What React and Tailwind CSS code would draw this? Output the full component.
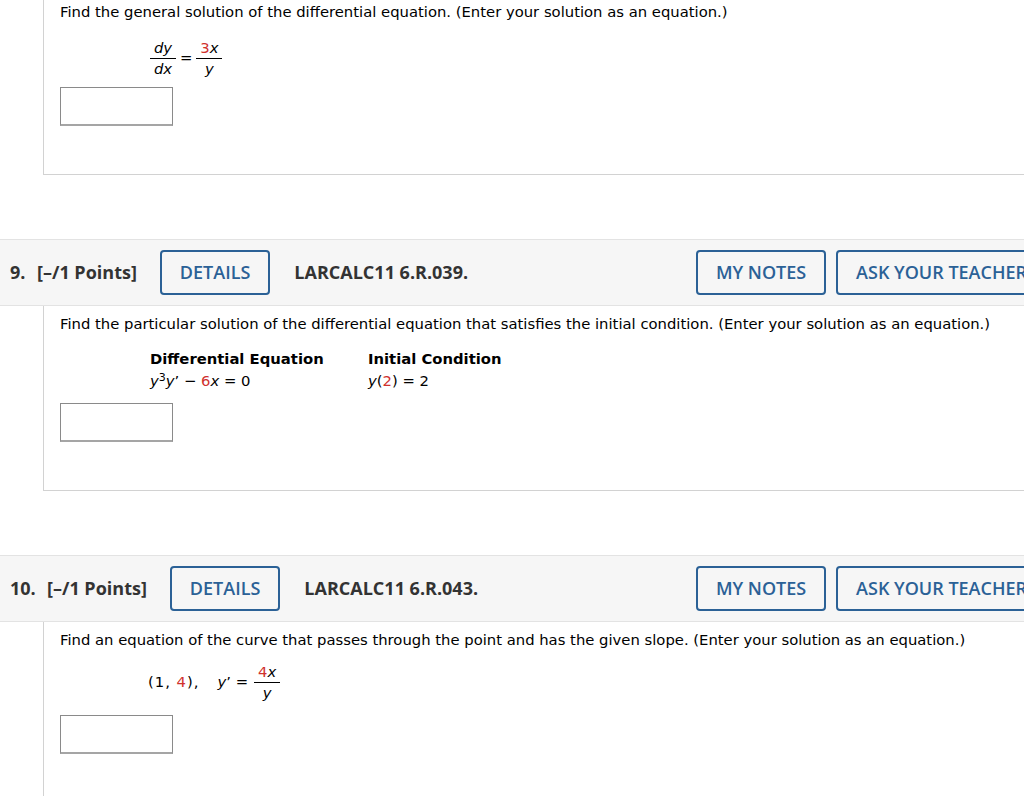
import React from "react";

const R = ({ children }) => <span className="text-[#d0312d]">{children}</span>;
const I = ({ children }) => <span className="italic">{children}</span>;

function Frac({ num, den, w = "w-[24px]" }) {
  return (
    <span className="inline-flex flex-col items-center align-middle">
      <span className="leading-[18px] pb-[1px] px-[2px]">{num}</span>
      <span className={`h-px bg-black ${w}`}></span>
      <span className="leading-[18px] pt-[1px] px-[2px]">{den}</span>
    </span>
  );
}

function InputBox({ className = "" }) {
  return (
    <div
      className={`w-[113px] h-[39px] border border-[#8a8a8a] border-b-2 border-b-[#a5a5a5] bg-white ${className}`}
    ></div>
  );
}

function Header({ num, numW, code }) {
  return (
    <div className="w-[1057px] h-[67px] bg-[#f6f6f6] border-y border-[#e3e3e3] flex items-center pl-[10px] font-['Open_Sans',sans-serif] text-[18px]">
      <span className={`font-bold text-[#333] ${numW}`}>{num}</span>
      <span className="font-bold text-[#333] mr-[6px]">[–/1 Points]</span>
      <button className="ml-[17px] h-[45px] px-[18px] border-2 border-[#2b6196] rounded-[4px] text-[#2b6196] font-semibold">
        DETAILS
      </button>
      <span className="ml-[24px] font-bold text-[#333]">{code}</span>
      <div className="ml-auto flex gap-[10px] pr-[10px]">
        <button className="h-[45px] w-[130px] border-2 border-[#2b6196] rounded-[4px] text-[#2b6196] font-semibold">
          MY NOTES
        </button>
        <button className="h-[45px] px-[18px] border-2 border-[#2b6196] rounded-[4px] text-[#2b6196] font-semibold whitespace-nowrap">
          ASK YOUR TEACHER
        </button>
      </div>
    </div>
  );
}

export default function App() {
  return (
    <div className="w-[1024px] h-[796px] overflow-hidden bg-white text-black font-['DejaVu_Sans',Verdana,sans-serif] text-[14.8px]">
      {/* Question 8 (partial) */}
      <div className="ml-[43px] h-[175px] border-l border-b border-[#d2d2d2] pl-[16px] pt-[2px]">
        <p className="leading-[20px]">
          Find the general solution of the differential equation. (Enter your solution as an equation.)
        </p>
        <div className="mt-[17px] ml-[90px] flex items-center">
          <Frac num={<I>dy</I>} den={<I>dx</I>} w="w-[26px]" />
          <span className="mx-[4px] leading-none">=</span>
          <Frac num={<><R>3</R><I>x</I></>} den={<I>y</I>} w="w-[26px]" />
        </div>
        <InputBox className="mt-[9px]" />
      </div>

      <div className="h-[64px]"></div>
      <Header num="9." numW="w-[27px]" code="LARCALC11 6.R.039." />

      {/* Question 9 */}
      <div className="ml-[43px] h-[185px] border-l border-b border-[#d2d2d2] pl-[16px] pt-[8px]">
        <p className="leading-[20px]">
          Find the particular solution of the differential equation that satisfies the initial condition. (Enter your solution as an equation.)
        </p>
        <div className="mt-[14px] ml-[90px] grid grid-cols-[218px_auto] leading-[22px]">
          <span className="font-bold">Differential Equation</span>
          <span className="font-bold">Initial Condition</span>
          <span>
            <I>y</I>
            <sup className="text-[11px]">3</sup>
            <I>y</I>’ − <R>6</R>
            <I>x</I> = 0
          </span>
          <span>
            <I>y</I>(<R>2</R>) = 2
          </span>
        </div>
        <InputBox className="mt-[11px]" />
      </div>

      <div className="h-[64px]"></div>
      <Header num="10." numW="w-[37px]" code="LARCALC11 6.R.043." />

      {/* Question 10 */}
      <div className="ml-[43px] h-[200px] border-l border-[#d2d2d2] pl-[16px] pt-[8px]">
        <p className="leading-[20px]">
          Find an equation of the curve that passes through the point and has the given slope. (Enter your solution as an equation.)
        </p>
        <div className="mt-[13px] ml-[88px] flex items-center">
          <span className="tracking-[1px]">
            (1,&nbsp;<R>4</R>),
          </span>
          <span className="ml-[18px]">
            <I>y</I>’ =
          </span>
          <span className="ml-[6px]">
            <Frac num={<><R>4</R><I>x</I></>} den={<I>y</I>} w="w-[26px]" />
          </span>
        </div>
        <InputBox className="mt-[13px]" />
      </div>
    </div>
  );
}
